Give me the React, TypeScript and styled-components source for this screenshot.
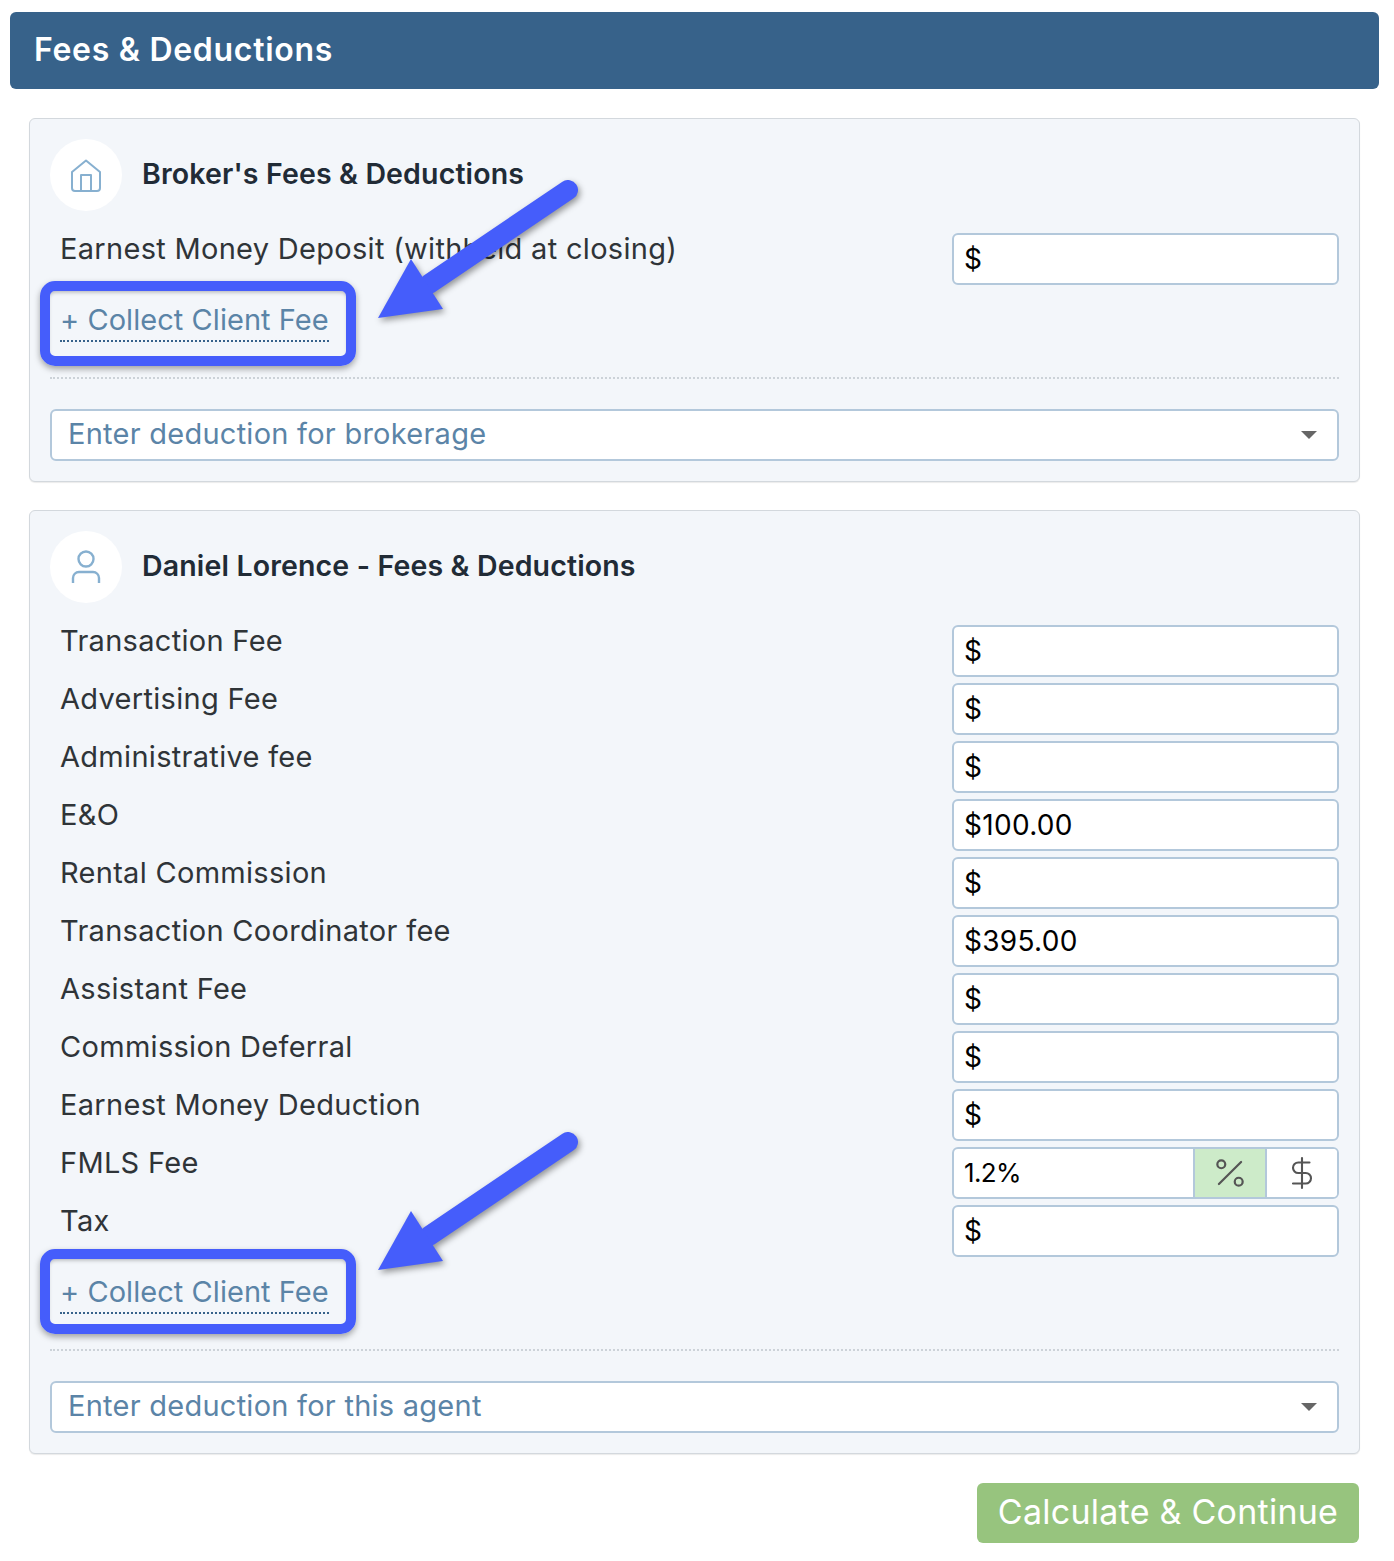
import styled, { createGlobalStyle } from "styled-components";
import { DollarSign, Percent } from "lucide-react";
import { FC } from "react";

const GlobalStyle = createGlobalStyle`
    * {
        box-sizing: border-box;
    }
    body {
        margin: 0;
        background: #fff;
        font-family: "Inter", "Noto Sans", sans-serif;
    }
`;

const Page = styled.div`
    width: 1394px;
    height: 1561px;
    padding: 12px 15px 0 10px;
`;

const Banner = styled.header`
    height: 77px;
    display: flex;
    align-items: center;
    padding: 0 0 2px 24px;
    background: #37628a;
    border-radius: 6px;
    color: #fff;
    font-size: 32px;
    font-weight: 600;
    letter-spacing: 0.7px;
`;

const Content = styled.div`
    padding: 29px 19px 0;
    display: flex;
    flex-direction: column;
`;

const Card = styled.section`
    background: #f3f6fa;
    border: 1px solid #d3d8dd;
    border-radius: 6px;
    padding: 20px;
    margin-bottom: 28px;
    box-shadow: 0 1px 1px rgba(0, 0, 0, 0.08);
`;

const CardHead = styled.div`
    display: flex;
    align-items: center;
    gap: 20px;
    margin-bottom: 22px;
`;

const IconCircle = styled.div`
    width: 72px;
    height: 72px;
    border-radius: 50%;
    background: #fff;
    display: flex;
    align-items: center;
    justify-content: center;
`;

const CardTitle = styled.h2`
    margin: 0 0 4px;
    font-size: 28.5px;
    font-weight: 600;
    color: #212b36;
    letter-spacing: 0.15px;
`;

const Rows = styled.div`
    display: flex;
    flex-direction: column;
    gap: 6px;
`;

const Row = styled.div`
    display: grid;
    grid-template-columns: 1fr 387px;
    height: 52px;
`;

const Label = styled.div`
    padding-left: 10px;
    font-size: 29px;
    line-height: 32px;
    color: #2f3438;
    letter-spacing: 0.3px;
`;

const Input = styled.input`
    width: 100%;
    height: 52px;
    padding: 0 10px;
    border: 2px solid #b3c8db;
    border-radius: 6px;
    background: #fff;
    color: #000;
    font-family: inherit;
    font-size: 28px;
    letter-spacing: 0.3px;
    outline: none;
`;

const ToggleField = styled.div`
    height: 52px;
    display: grid;
    grid-template-columns: 1fr 72px 72px;
    border: 2px solid #b3c8db;
    border-radius: 6px;
    background: #fff;
    overflow: hidden;
`;

const ToggleInput = styled.input`
    min-width: 0;
    border: 0;
    padding: 0 10px 2px;
    background: transparent;
    color: #000;
    font-family: inherit;
    font-size: 26px;
    letter-spacing: -0.6px;
    outline: none;
`;

const ToggleOption = styled.div<{ $active?: boolean }>`
    display: flex;
    align-items: center;
    justify-content: center;
    border-left: 2px solid #b3c8db;
    background: ${(props) => (props.$active ? "#cdebc9" : "#fff")};
    color: #555;
`;

const LinkWrap = styled.div`
    position: relative;
    width: fit-content;
    margin: 18px 0 35px 10px;
`;

const ClientLink = styled.a`
    display: block;
    height: 39px;
    width: 269px;
    border-bottom: 2px dotted #37628a;
    color: #5b84a7;
    font-size: 29px;
    line-height: 34px;
    letter-spacing: 0.05px;
    white-space: nowrap;
`;

const Highlight = styled.div<{ $top: number }>`
    position: absolute;
    left: -20px;
    top: ${(props) => props.$top}px;
    width: 316px;
    height: 85px;
    border: 10px solid #455dfb;
    border-radius: 15px;
    box-shadow: 0 3px 6px rgba(0, 0, 0, 0.35), inset 0 3px 4px -2px rgba(0, 0, 0, 0.3);
    pointer-events: none;
`;

const ArrowSvg = styled.svg<{ $top: number }>`
    position: absolute;
    left: 299px;
    top: ${(props) => props.$top}px;
    overflow: visible;
    filter: drop-shadow(2px 3px 3px rgba(0, 0, 0, 0.4));
    pointer-events: none;
`;

const Divider = styled.div`
    border-top: 2px dotted #ccd2d8;
    margin-bottom: 30px;
`;

const SelectBox = styled.div`
    height: 52px;
    display: flex;
    align-items: center;
    justify-content: space-between;
    padding: 0 20px 4px 16px;
    border: 2px solid #b3c8db;
    border-radius: 6px;
    background: #fff;
    color: #5b84a7;
    font-size: 29px;
    letter-spacing: 0.25px;
`;

const Caret = styled.span`
    width: 0;
    height: 0;
    margin-top: 4px;
    border-left: 8px solid transparent;
    border-right: 8px solid transparent;
    border-top: 8px solid #666;
`;

const Footer = styled.div`
    display: flex;
    justify-content: flex-end;
    padding: 1px 1px 0 0;
`;

const PrimaryButton = styled.button`
    width: 382px;
    height: 60px;
    border: 0;
    border-radius: 6px;
    background: #97c47e;
    color: #fff;
    font-family: inherit;
    font-size: 34px;
    letter-spacing: 0.25px;
    padding: 0 0 3px;
`;

const HouseIcon = () => (
    <svg width="30" height="33" viewBox="0 0 30 33" fill="none" stroke="#87b0d0" strokeWidth="2" strokeLinejoin="round">
        <path d="M15 1.5 L29 13 V29 a3 3 0 0 1 -3 3 H4 a3 3 0 0 1 -3 -3 V13 Z" />
        <path d="M10 32 V16 H20 V32" />
    </svg>
);

const UserIcon = () => (
    <svg width="30" height="34" viewBox="0 0 30 34" fill="none" stroke="#87b0d0" strokeWidth="2.4">
        <circle cx="15" cy="9" r="7.5" />
        <path d="M2 33 V28 a6 6 0 0 1 6 -6 H22 a6 6 0 0 1 6 6 V33" />
    </svg>
);

const Arrow: FC<{ top: number }> = ({ top }) => (
    <ArrowSvg $top={top} width="230" height="160" viewBox="0 0 230 160">
        <line x1="209" y1="22" x2="70" y2="116" stroke="#455dfb" strokeWidth="20" strokeLinecap="round" />
        <polygon points="19,150 52,91 84,141" fill="#455dfb" />
    </ArrowSvg>
);

const ClientFee: FC<{ boxTop: number; arrowTop: number }> = ({ boxTop, arrowTop }) => (
    <LinkWrap>
        <ClientLink>+ Collect Client Fee</ClientLink>
        <Highlight $top={boxTop} />
        <Arrow top={arrowTop} />
    </LinkWrap>
);

const FeeRow: FC<{ label: string; value?: string }> = ({ label, value = "$" }) => (
    <Row>
        <Label>{label}</Label>
        <Input readOnly value={value} />
    </Row>
);

const agentFees = [
    { label: "Transaction Fee" },
    { label: "Advertising Fee" },
    { label: "Administrative fee" },
    { label: "E&O", value: "$100.00" },
    { label: "Rental Commission" },
    { label: "Transaction Coordinator fee", value: "$395.00" },
    { label: "Assistant Fee" },
    { label: "Commission Deferral" },
    { label: "Earnest Money Deduction" },
];

const App = () => {
    return (
        <Page>
            <GlobalStyle />
            <Banner>Fees &amp; Deductions</Banner>
            <Content>
                <Card>
                    <CardHead>
                        <IconCircle>
                            <HouseIcon />
                        </IconCircle>
                        <CardTitle>Broker's Fees &amp; Deductions</CardTitle>
                    </CardHead>
                    <Rows>
                        <FeeRow label="Earnest Money Deposit (withheld at closing)" />
                    </Rows>
                    <ClientFee boxTop={-22} arrowTop={-135} />
                    <Divider />
                    <SelectBox>
                        Enter deduction for brokerage
                        <Caret />
                    </SelectBox>
                </Card>
                <Card>
                    <CardHead>
                        <IconCircle>
                            <UserIcon />
                        </IconCircle>
                        <CardTitle>Daniel Lorence - Fees &amp; Deductions</CardTitle>
                    </CardHead>
                    <Rows>
                        {agentFees.map((fee) => (
                            <FeeRow key={fee.label} label={fee.label} value={fee.value} />
                        ))}
                        <Row>
                            <Label>FMLS Fee</Label>
                            <ToggleField>
                                <ToggleInput readOnly value="1.2%" />
                                <ToggleOption $active>
                                    <Percent size={38} strokeWidth={1.4} />
                                </ToggleOption>
                                <ToggleOption>
                                    <DollarSign size={36} strokeWidth={1.4} />
                                </ToggleOption>
                            </ToggleField>
                        </Row>
                        <FeeRow label="Tax" />
                    </Rows>
                    <ClientFee boxTop={-26} arrowTop={-155} />
                    <Divider />
                    <SelectBox>
                        Enter deduction for this agent
                        <Caret />
                    </SelectBox>
                </Card>
                <Footer>
                    <PrimaryButton>Calculate &amp; Continue</PrimaryButton>
                </Footer>
            </Content>
        </Page>
    );
};

export default App;
